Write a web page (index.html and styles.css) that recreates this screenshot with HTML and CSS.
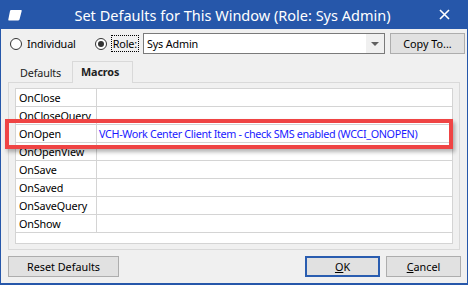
FILE: index.html
```html
<!DOCTYPE html>
<html lang="en">
<head>
  <meta charset="UTF-8">
  <title>Set Defaults for This Window</title>
  <link rel="stylesheet" href="styles.css">
</head>
<body>
  <div class="window">
    <div class="titlebar">
      <svg class="app-icon" width="14" height="12" viewBox="0 0 14 12">
        <path d="M3 1 H13 Q14 1 13.7 2 L11.5 10.5 Q11.2 11.5 10 11.5 H1 Q0 11.5 0.3 10.5 L2 2 Q2.3 1 3 1 Z" fill="#fff"/>
      </svg>
      <span class="title">Set Defaults for This Window (Role: Sys Admin)</span>
      <svg class="close" width="11" height="11" viewBox="0 0 11 11">
        <path d="M1 1 L10 10 M10 1 L1 10" stroke="#fff" stroke-width="1.6"/>
      </svg>
    </div>

    <div class="role-row">
      <label class="radio"><span class="dot"></span>Individual</label>
      <label class="radio checked"><span class="dot"></span><span class="focus">Role:</span></label>
      <div class="combo">
        <span class="combo-value">Sys Admin</span>
        <span class="combo-arrow"></span>
      </div>
      <button class="btn copy">Copy To...</button>
    </div>

    <div class="tabs">
      <div class="tab">Defaults</div>
      <div class="tab active">Macros</div>
    </div>

    <div class="panel">
      <div class="grid">
        <div class="row"><div class="name">OnClose</div><div class="value"></div></div>
        <div class="row"><div class="name">OnCloseQuery</div><div class="value"></div></div>
        <div class="row"><div class="name">OnOpen</div><div class="value macro">VCH-Work Center Client Item - check SMS enabled (WCCI_ONOPEN)</div></div>
        <div class="row"><div class="name">OnOpenView</div><div class="value"></div></div>
        <div class="row"><div class="name">OnSave</div><div class="value"></div></div>
        <div class="row"><div class="name">OnSaved</div><div class="value"></div></div>
        <div class="row"><div class="name">OnSaveQuery</div><div class="value"></div></div>
        <div class="row"><div class="name">OnShow</div><div class="value"></div></div>
      </div>
    </div>

    <div class="footer">
      <button class="btn reset">Reset Defaults</button>
      <span class="spacer"></span>
      <button class="btn ok"><u>O</u>K</button>
      <button class="btn cancel"><u>C</u>ancel</button>
    </div>

    <!-- annotation box drawn over the OnOpen row -->
    <div class="highlight"></div>
  </div>
</body>
</html>
```

FILE: styles.css
```css
/* Base */
body {
  margin: 0;
  font-family: 'Noto Sans', 'Open Sans', sans-serif;
  font-size: 10.8px;
  letter-spacing: -0.15px;
  color: #000;
  background: #fff;
}

/* Dialog frame */
.window {
  position: relative;
  width: 468px;
  height: 285px;
  box-sizing: border-box;
  border: 1px solid #2657aa;
  border-top: none;
  border-bottom-width: 2px;
  background: #f0f0f0;
  display: flex;
  flex-direction: column;
}

/* Title bar */
.titlebar {
  height: 29px;
  margin: 0 -1px;
  background: #2657aa;
  color: #fff;
  display: flex;
  align-items: center;
  padding: 0 18px 0 8px;
  flex-shrink: 0;
}

.app-icon {
  flex-shrink: 0;
}

.title {
  flex: 1;
  text-align: center;
  font-size: 14.5px;
  letter-spacing: 0;
  padding-left: 4px;
}

/* Role selection row */
.role-row {
  display: flex;
  align-items: center;
  height: 21px;
  margin-top: 4px;
  padding-left: 9px;
}

.radio {
  display: flex;
  align-items: center;
  gap: 5px;
  margin-right: 19px;
}

.dot {
  width: 12px;
  height: 12px;
  border: 1px solid #333;
  border-radius: 50%;
  background: #fff;
  box-sizing: border-box;
  position: relative;
}

.checked .dot::after {
  content: "";
  position: absolute;
  left: 2px;
  top: 2px;
  width: 6px;
  height: 6px;
  border-radius: 50%;
  background: #333;
}

.checked {
  margin-right: 5px;
}

.focus {
  outline: 1px dotted #000;
  padding: 0 1px;
  line-height: 15px;
}

.combo {
  width: 242px;
  height: 21px;
  box-sizing: border-box;
  border: 1px solid #7a7a7a;
  background: #fff;
  display: flex;
  align-items: stretch;
}

.combo-value {
  flex: 1;
  padding-left: 3px;
  line-height: 19px;
}

.combo-arrow {
  width: 18px;
  background: #f0f0f0;
  display: flex;
  align-items: center;
  justify-content: center;
}

.combo-arrow::before {
  content: "";
  border-left: 4px solid transparent;
  border-right: 4px solid transparent;
  border-top: 4px solid #606060;
}

/* Buttons */
.btn {
  font: inherit;
  color: #000;
  height: 21px;
  box-sizing: border-box;
  border: 1px solid #adadad;
  background: #e1e1e1;
  padding: 0;
}

.copy {
  width: 75px;
  margin-left: 5px;
}

/* Tabs */
.tabs {
  display: flex;
  align-items: flex-end;
  height: 20px;
  margin-top: 8px;
  padding-left: 10px;
}

.tab {
  height: 18px;
  line-height: 18px;
  padding: 0 9px;
  color: #222;
}

.tab.active {
  height: 21px;
  line-height: 19px;
  margin-bottom: -1px;
  margin-left: 2px;
  padding: 0 0 0 8px;
  width: 51px;
  font-weight: bold;
  border: 1px solid #d9d9d9;
  border-bottom: none;
  background: #f0f0f0;
  position: relative;
  z-index: 1;
}

/* Tab panel */
.panel {
  margin: 0 7px;
  height: 168px;
  box-sizing: border-box;
  border: 1px solid #d9d9d9;
  padding: 5px 6px 6px 6px;
}

.grid {
  height: 156px;
  box-sizing: border-box;
  border: 1px solid #d4d4d4;
  background: #fff;
}

.row {
  display: flex;
  height: 18px;
  border-bottom: 1px solid #d4d4d4;
  box-sizing: border-box;
}

.name {
  flex-shrink: 0;
  width: 81px;
  padding-left: 3px;
  line-height: 17px;
  border-right: 1px solid #d4d4d4;
  box-sizing: border-box;
  white-space: nowrap;
  overflow: hidden;
}

.value {
  flex: 1;
  min-width: 0;
  padding-left: 2px;
  line-height: 17px;
  white-space: nowrap;
  overflow: hidden;
}

.macro {
  color: #1a1aff;
  letter-spacing: -0.35px;
}

/* Footer buttons */
.footer {
  display: flex;
  margin-top: 6px;
  padding: 0 6px 0 7px;
}

.spacer {
  flex: 1;
}

.reset {
  width: 111px;
}

.ok {
  width: 75px;
  border: 2px solid #2a5db0;
  margin-right: 6px;
}

.cancel {
  width: 75px;
}

/* Red annotation */
.highlight {
  position: absolute;
  left: 4px;
  top: 119px;
  width: 448px;
  height: 30px;
  box-sizing: border-box;
  border: 4px solid #ef4444;
  box-shadow: 2px 3px 4px rgba(0, 0, 0, 0.3);
}
```
